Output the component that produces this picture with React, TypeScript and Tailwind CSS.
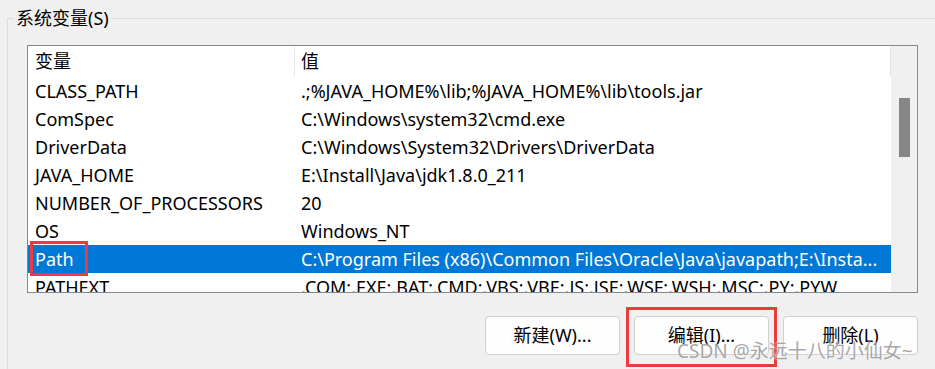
const rows = [
    { name: "CLASS_PATH", value: ".;%JAVA_HOME%\\lib;%JAVA_HOME%\\lib\\tools.jar" },
    { name: "ComSpec", value: "C:\\Windows\\system32\\cmd.exe" },
    { name: "DriverData", value: "C:\\Windows\\System32\\Drivers\\DriverData" },
    { name: "JAVA_HOME", value: "E:\\Install\\Java\\jdk1.8.0_211" },
    { name: "NUMBER_OF_PROCESSORS", value: "20" },
    { name: "OS", value: "Windows_NT" },
    {
        name: "Path",
        value: "C:\\Program Files (x86)\\Common Files\\Oracle\\Java\\javapath;E:\\Insta...",
        selected: true,
    },
    { name: "PATHEXT", value: ".COM;.EXE;.BAT;.CMD;.VBS;.VBE;.JS;.JSE;.WSF;.WSH;.MSC;.PY;.PYW" },
]

const font = "font-['Noto_Sans','Noto_Sans_CJK_SC',sans-serif]"

const Button = ({ label }: { label: string }) => {
    return (
        <button className="w-[135px] h-[39px] rounded-[4px] border border-[#d0d0d0] bg-[#fdfdfd] text-[18px] text-black">
            {label}
        </button>
    )
}

const App = () => {
    return (
        <div className={`relative w-[935px] h-[369px] overflow-hidden bg-[#f0f0f0] text-black ${font}`}>
            <fieldset className="ml-[7px] mt-[8px] w-[928px] h-[361px] border-t border-l border-[#dcdcdc] pl-[6px]">
                <legend className="px-[2px] text-[18px] leading-[20px]">系统变量(S)</legend>

                <div className="ml-[13px] mt-[17px] w-[891px] h-[248px] border border-[#828790] bg-white flex">
                    <div className="flex-1 overflow-hidden">
                        <div className="flex h-[31px] items-center text-[18px]">
                            <div className="w-[266px] pl-[7px]">变量</div>
                            <div className="w-px h-[29px] bg-[#e5e5e5]"></div>
                            <div className="flex-1 pl-[6px]">值</div>
                            <div className="w-px h-[29px] bg-[#e5e5e5]"></div>
                        </div>
                        {rows.map((r) => (
                            <div
                                key={r.name}
                                className={`flex h-[28px] items-center text-[18px] leading-[24px] whitespace-nowrap ${r.selected ? "bg-[#0078d7] text-white" : ""}`}
                            >
                                <div className="w-[267px] pl-[7px] overflow-hidden">{r.name}</div>
                                <div className="flex-1 pl-[6px] overflow-hidden">{r.value}</div>
                            </div>
                        ))}
                    </div>
                    <div className="w-[26px] bg-[#f0f0f0] flex justify-center">
                        <div className="mt-[52px] w-[11px] h-[59px] bg-[#868686]"></div>
                    </div>
                </div>

                <div className="mt-[23px] w-[904px] flex justify-end gap-[14px]">
                    <Button label="新建(W)..." />
                    <Button label="编辑(I)..." />
                    <Button label="删除(L)" />
                </div>
            </fieldset>

            {/* red highlight boxes */}
            <div className="absolute left-[30px] top-[241px] w-[58px] h-[35px] border-[3px] border-[#ec3b3b]"></div>
            <div className="absolute left-[626px] top-[307px] w-[151px] h-[60px] border-[3px] border-[#ec3b3b]"></div>

            <div className="absolute left-[677px] top-[339px] text-[19px] leading-[24px] text-[#909090]/80 [text-shadow:0_0_2px_#ffffff]">
                CSDN @永远十八的小仙女~
            </div>
        </div>
    )
}

export default App
